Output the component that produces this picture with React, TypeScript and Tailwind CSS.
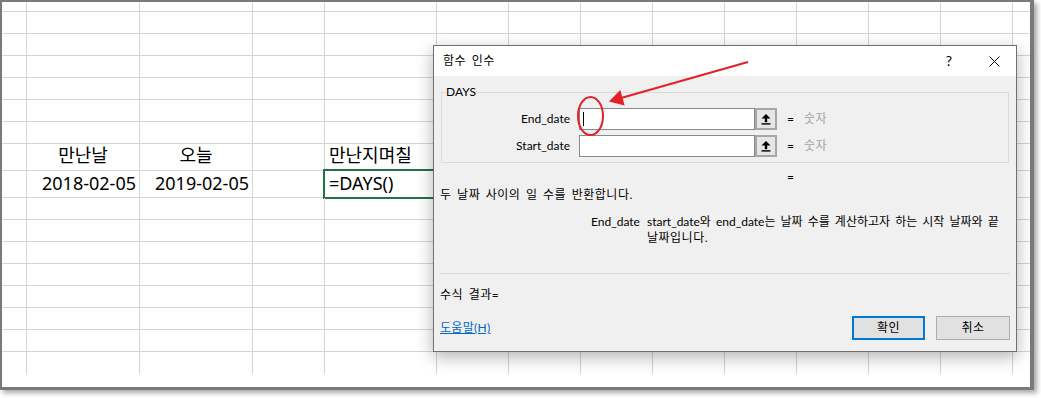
import React from "react";

const ROWS = 17;
const COLS = 14;

function cellContent(r: number, c: number) {
  if (r === 7 && c === 1)
    return <div className="flex h-full items-end justify-center pb-[6px]">만난날</div>;
  if (r === 7 && c === 2)
    return <div className="flex h-full items-end justify-center pb-[6px]">오늘</div>;
  if (r === 7 && c === 4)
    return <div className="flex h-full items-end pb-[6px] pl-[4px] whitespace-nowrap">만난지며칠</div>;
  if (r === 8 && c === 1)
    return <div className="flex h-full items-end justify-end pb-[5px] pr-[3px]">2018-02-05</div>;
  if (r === 8 && c === 2)
    return <div className="flex h-full items-end justify-end pb-[5px] pr-[3px]">2019-02-05</div>;
  if (r === 8 && c === 4)
    return (
      <>
        <div className="flex h-full items-end pb-[5px] pl-[4px] whitespace-nowrap">=DAYS()</div>
        <div className="absolute left-[-2px] top-[-2px] w-[115px] h-[30px] border-2 border-[#217346]" />
      </>
    );
  return null;
}

function UpIcon() {
  return (
    <svg width="10" height="11" viewBox="0 0 10 11">
      <polygon points="5,0 0.5,4.5 9.5,4.5" fill="#000" />
      <rect x="3.8" y="4" width="2.4" height="4.2" fill="#000" />
      <rect x="0.5" y="9.2" width="9" height="1.4" fill="#000" />
    </svg>
  );
}

function ArgRow({ label, cursor }: { label: string; cursor?: boolean }) {
  return (
    <div className="flex h-[22px] items-center">
      <div className="w-[128px] text-right">{label}</div>
      <div className="ml-[9px] flex h-[22px] w-[176px] items-center border border-[#8a8a8a] bg-white pl-[3px]">
        {cursor && <div className="h-[14px] w-px bg-black" />}
      </div>
      <div className="flex h-[22px] w-[22px] items-center justify-center border-2 border-[#a6a6a6] bg-[#e6e6e6]">
        <UpIcon />
      </div>
      <div className="ml-[10px] w-[6px]">=</div>
      <div className="ml-[11px] tracking-[0.5px] text-[#a3a3a3]">숫자</div>
    </div>
  );
}

export default function App() {
  const cells: React.ReactNode[] = [];
  for (let r = 0; r < ROWS; r++) {
    for (let c = 0; c < COLS; c++) {
      const br = c < COLS - 1 ? "border-r" : "";
      const bb = r < ROWS - 1 ? "border-b" : "";
      cells.push(
        <div key={`${r}-${c}`} className={`relative border-[#d4d4d4] ${br} ${bb}`}>
          {cellContent(r, c)}
        </div>
      );
    }
  }

  return (
    <div className="relative h-[398px] w-[1041px] overflow-hidden bg-white text-black">
      {/* spreadsheet frame */}
      <div className="h-[390px] w-[1034px] border-b-[3px] border-l-2 border-r-4 border-t-2 border-[#7a7a7a] bg-white font-['Noto_Sans','Noto_Sans_CJK_KR',sans-serif] shadow-[3px_3px_5px_rgba(0,0,0,0.35)]">
        <div className="grid grid-cols-[25px_113px_113px_72px_112px_repeat(8,72px)_17px] grid-rows-[10px_repeat(6,22px)_27px_27px_repeat(8,22px)_13px] text-[18px] leading-[18px]">
          {cells}
        </div>
      </div>

      {/* dialog */}
      <div className="absolute left-[433px] top-[45px] flex h-[307px] w-[584px] flex-col border border-[#707070] bg-[#f0f0f0] font-['Lato','Noto_Sans_CJK_KR',sans-serif] text-[12px] leading-[16px] [word-spacing:2px] shadow-[0_5px_16px_rgba(0,0,0,0.3)]">
        <div className="flex h-[30px] items-center bg-white pl-[9px]">
          <span className="tracking-[0.5px]">함수 인수</span>
          <div className="ml-auto flex h-full w-[46px] items-center justify-center text-[14px]">?</div>
          <div className="flex h-full w-[44px] items-center justify-center">
            <svg width="11" height="11" viewBox="0 0 11 11">
              <path d="M0.5 0.5 L10.5 10.5 M10.5 0.5 L0.5 10.5" stroke="#000" strokeWidth="1" />
            </svg>
          </div>
        </div>

        <div className="flex flex-1 flex-col px-[6px]">
          <div className="mx-[1px] mt-[16px] flex flex-col border border-[#dadada] pb-[5px]">
            <div className="-mt-[9px] ml-[3px] w-fit bg-[#f0f0f0] px-[1px]">DAYS</div>
            <div className="mt-[8px]">
              <ArgRow label="End_date" cursor />
            </div>
            <div className="mt-[5px]">
              <ArgRow label="Start_date" />
            </div>
          </div>

          <div className="mt-[6px] pl-[347px]">=</div>
          <div className="mt-[2px] tracking-[0.5px]">두 날짜 사이의 일 수를 반환합니다.</div>
          <div className="mt-[11px] flex pl-[151px]">
            <div className="w-[56px]">End_date</div>
            <div className="w-[362px]">
              <div className="whitespace-nowrap">start_date와 end_date는 날짜 수를 계산하고자 하는 시작 날짜와 끝</div>
              <div className="tracking-[0.5px]">날짜입니다.</div>
            </div>
          </div>

          <div className="mt-[27px] h-px bg-[#dcdcdc]" />
          <div className="mt-[13px] tracking-[0.5px]">수식 결과=</div>

          <div className="mt-[13px] flex items-center">
            <span className="tracking-[0.3px] text-[#0066cc] underline">도움말(H)</span>
            <div className="ml-auto flex h-[24px] w-[73px] items-center justify-center border-2 border-[#0078d7] bg-[#e1e1e1] tracking-[0.5px]">
              확인
            </div>
            <div className="ml-[11px] flex h-[24px] w-[74px] items-center justify-center border border-[#adadad] bg-[#e1e1e1] tracking-[0.5px]">
              취소
            </div>
          </div>
        </div>
      </div>

      {/* red annotation */}
      <svg className="pointer-events-none absolute left-0 top-0" width="1041" height="398">
        <ellipse cx="590.5" cy="116" rx="12.5" ry="19" fill="none" stroke="#e51f27" strokeWidth="2" />
        <line x1="748" y1="62" x2="621" y2="98" stroke="#e51f27" strokeWidth="2" />
        <polygon points="609,101.5 620.3,90 624.7,105.4" fill="#e51f27" />
      </svg>
    </div>
  );
}
